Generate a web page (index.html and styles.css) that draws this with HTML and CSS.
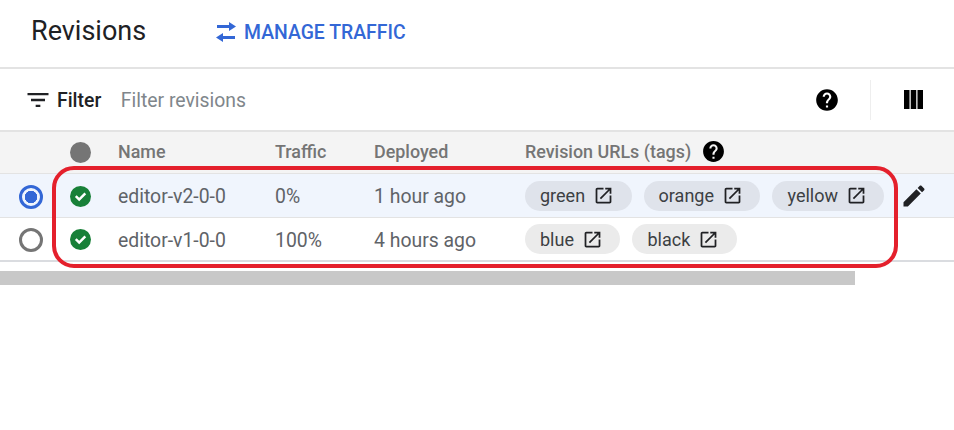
FILE: index.html
```html
<!DOCTYPE html>
<html lang="en">
<head>
<meta charset="utf-8">
<title>Revisions</title>
<link rel="stylesheet" href="styles.css">
</head>
<body>
<svg class="defs" width="0" height="0" aria-hidden="true">
  <symbol id="help" viewBox="0 0 24 24"><path d="M12 2C6.48 2 2 6.48 2 12s4.48 10 10 10 10-4.48 10-10S17.52 2 12 2zm1 17h-2v-2h2v2zm2.07-7.75l-.9.92C13.45 12.9 13 13.5 13 15h-2v-.5c0-1.1.45-2.1 1.17-2.83l1.24-1.26c.37-.36.59-.86.59-1.41 0-1.1-.9-2-2-2s-2 .9-2 2H8c0-2.21 1.79-4 4-4s4 1.79 4 4c0 .88-.36 1.68-.93 2.25z"/></symbol>
  <symbol id="ok" viewBox="0 0 24 24"><circle cx="12" cy="12" r="12" fill="#188038"/><path d="M5.6 12.6l2-2 2.9 2.9 6-6 2 2-8 8z" fill="#fff"/></symbol>
  <symbol id="open" viewBox="0 0 24 24"><path d="M19 19H5V5h7V3H5c-1.11 0-2 .9-2 2v14c0 1.1.89 2 2 2h14c1.1 0 2-.9 2-2v-7h-2v7zM14 3v2h3.59l-9.83 9.83 1.41 1.41L19 6.41V10h2V3h-7z"/></symbol>
</svg>
<main class="page">
  <header class="title-bar">
    <h1 class="title">Revisions</h1>
    <a class="action">
      <svg class="action-icon" viewBox="0 0 20 20"><path d="M1 3H13V0L20 4.5 13 9V6H1zM19 14H7V11L0 15.5 7 20V17H19z"/></svg>
      MANAGE TRAFFIC
    </a>
  </header>
  <div class="filter-bar">
    <svg class="filter-icon" viewBox="0 0 24 24"><path d="M10 18h4v-2h-4v2zM3 6v2h18V6H3zm3 7h12v-2H6v2z"/></svg>
    <span class="filter-label">Filter</span>
    <span class="filter-hint">Filter revisions</span>
    <svg class="bar-help"><use href="#help"/></svg>
    <span class="bar-divider"></span>
    <svg class="columns-icon" viewBox="0 0 19 19"><path d="M0 0h5.5v19H0zM6.75 0h5.5v19h-5.5zM13.5 0H19v19h-5.5z"/></svg>
  </div>
  <div class="row head">
    <div class="c-radio"></div>
    <div class="c-status"><span class="dot"></span></div>
    <div class="c-name">Name</div>
    <div class="c-traffic">Traffic</div>
    <div class="c-deployed">Deployed</div>
    <div class="c-urls">Revision URLs (tags)<svg class="head-help"><use href="#help"/></svg></div>
  </div>
  <div class="row body selected">
    <div class="c-radio"><span class="radio on"></span></div>
    <div class="c-status"><svg class="ok"><use href="#ok"/></svg></div>
    <div class="c-name">editor-v2-0-0</div>
    <div class="c-traffic">0%</div>
    <div class="c-deployed">1 hour ago</div>
    <div class="c-urls">
      <span class="chip">green<svg class="open"><use href="#open"/></svg></span>
      <span class="chip">orange<svg class="open"><use href="#open"/></svg></span>
      <span class="chip">yellow<svg class="open"><use href="#open"/></svg></span>
      <svg class="edit" viewBox="0 0 24 24"><path d="M3 17.25V21h3.75L17.81 9.94l-3.75-3.75L3 17.25zM20.71 7.04c.39-.39.39-1.02 0-1.41l-2.34-2.34c-.39-.39-1.02-.39-1.41 0l-1.83 1.83 3.75 3.75 1.83-1.83z"/></svg>
    </div>
  </div>
  <div class="row body last">
    <div class="c-radio"><span class="radio"></span></div>
    <div class="c-status"><svg class="ok"><use href="#ok"/></svg></div>
    <div class="c-name">editor-v1-0-0</div>
    <div class="c-traffic">100%</div>
    <div class="c-deployed">4 hours ago</div>
    <div class="c-urls">
      <span class="chip">blue<svg class="open"><use href="#open"/></svg></span>
      <span class="chip">black<svg class="open"><use href="#open"/></svg></span>
    </div>
  </div>
  <div class="scroll-track"><div class="scroll-thumb"></div></div>
  <div class="highlight"></div>
</main>
</body>
</html>
```
FILE: styles.css
```css
* { box-sizing: border-box; }
html, body { margin: 0; background: #fff; overflow: hidden; }
body { font-family: Roboto, "Liberation Sans", sans-serif; color: #202124; }
.defs { position: absolute; }
.page { position: relative; width: 954px; height: 430px; }

.title-bar { display: flex; align-items: center; height: 69px; padding: 0 0 5px 31px; border-bottom: 2px solid #e3e3e3; }
.title { margin: 0; width: 185px; font-size: 27px; font-weight: 400; color: #202124; line-height: 32px; }
.action { display: flex; align-items: center; gap: 8px; padding-top: 2px; font-size: 19.4px; font-weight: 500; color: #3367d6; }
.action-icon { width: 20px; height: 20px; fill: #3367d6; }

.filter-bar { display: flex; align-items: center; height: 61px; padding: 0 31px 0 23.5px; }
.filter-icon { width: 28px; height: 28px; fill: #202124; }
.filter-label { margin-left: 5.5px; padding-top: 2px; font-size: 19.4px; font-weight: 500; color: #202124; }
.filter-hint { margin-left: 19.5px; padding-top: 2px; flex: 1; font-size: 19.4px; color: #80868b; }
.bar-help { width: 26px; height: 26px; fill: #000; }
.bar-divider { width: 1px; height: 40px; margin: 0 33px 0 30px; background: #eee; }
.columns-icon { width: 19px; height: 19px; fill: #000; }

.row { display: flex; align-items: center; font-size: 19.4px; color: #5f6368; }
.head { height: 44px; background: #f4f4f4; border-top: 2px solid #e3e3e3; border-bottom: 1px solid #e3e3e3; font-size: 17.9px; font-weight: 500; color: #757575; }
.head .c-name, .head .c-traffic, .head .c-deployed { padding-bottom: 2px; }
.head .c-urls { padding-bottom: 2px; }
.body { height: 44px; border-bottom: 1px solid #e3e3e3; }
.body .c-name, .body .c-traffic, .body .c-deployed { padding-top: 2px; }
.selected { background: #f0f5fd; }
.last { border-bottom: 2px solid #dadce0; }

.c-radio { width: 56px; display: flex; justify-content: center; padding-left: 6px; }
.c-status { width: 49px; display: flex; justify-content: center; }
.c-name { width: 157px; margin-left: 13px; }
.c-traffic { width: 99px; }
.c-deployed { width: 151px; }
.c-urls { display: flex; align-items: center; gap: 12px; flex: 1; }

.dot { width: 21px; height: 21px; border-radius: 50%; background: #757575; }
.ok { width: 21px; height: 21px; margin-top: 2px; }
.radio { width: 24px; height: 24px; margin-top: 3px; border-radius: 50%; border: 3px solid #757575; background: #fff; }
.radio.on { border-color: #3367d6; background: radial-gradient(circle, #3367d6 0 6px, #f0f5fd 6.5px); }
.last .ok, .last .radio { margin-top: 1px; }

.head-help { width: 25px; height: 25px; fill: #000; margin-left: -2px; }
.chip { display: inline-flex; align-items: center; gap: 8px; height: 30px; padding: 0 17.5px 0 15px; border-radius: 15px; background: #ebebeb; color: #3c4043; font-size: 18px; white-space: nowrap; }
.selected .chip { background: #dfe3eb; }
.open { width: 21px; height: 21px; fill: #202124; }
.edit { width: 28px; height: 28px; fill: #202124; margin-left: 4px; }

.scroll-track { height: 24px; padding-top: 9px; }
.scroll-thumb { width: 855px; height: 14px; background: #c8c8c8; }

.highlight { position: absolute; left: 52px; top: 166px; width: 846px; height: 102px; border: 4px solid #e4202c; border-radius: 22px; pointer-events: none; }
```
